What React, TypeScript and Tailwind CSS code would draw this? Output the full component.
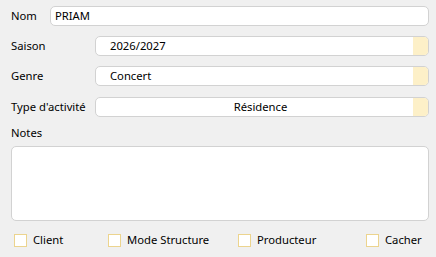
import React from "react";

const font = { fontFamily: '"Noto Sans", "Segoe UI", sans-serif' };

const SelectField = ({ value, center }: { value: string; center?: boolean }) => (
  <div className="ml-auto flex h-[20px] w-[334px] overflow-hidden rounded-[5px] border border-[#d2d2d2] bg-white">
    <div
      className={
        "flex flex-1 items-center text-[11.25px] text-black " +
        (center ? "justify-center pl-[12px]" : "pl-[14px]")
      }
    >
      {value}
    </div>
    <div className="w-[15px] bg-[#fdf0c8]" />
  </div>
);

const Check = ({ label, className }: { label: string; className: string }) => (
  <div className={"flex items-center " + className}>
    <div className="h-[13px] w-[13px] shrink-0 border border-[#ecd48e] bg-white" />
    <span className="ml-[6px] text-[11.25px] text-black">{label}</span>
  </div>
);

const App = () => {
  return (
    <div className="h-[257px] w-[436px] bg-[#f0f0f0] pl-[11px] pr-[7px] pt-[6px]" style={font}>
      <div className="flex h-[20px] items-center">
        <span className="text-[11.25px] text-black">Nom</span>
        <div className="ml-auto flex h-[20px] w-[379px] items-center rounded-[5px] border border-[#d2d2d2] bg-white pl-[4px] text-[11.25px] text-black">
          PRIAM
        </div>
      </div>
      <div className="mt-[10px] flex h-[20px] items-center">
        <span className="text-[11.25px] text-black">Saison</span>
        <SelectField value="2026/2027" />
      </div>
      <div className="mt-[10px] flex h-[20px] items-center">
        <span className="text-[11.25px] text-black">Genre</span>
        <SelectField value="Concert" />
      </div>
      <div className="mt-[11px] flex h-[20px] items-center">
        <span className="text-[11.25px] text-black">Type d'activité</span>
        <SelectField value="Résidence" center />
      </div>
      <div className="mt-[8px] text-[11.25px] leading-[16px] text-black">Notes</div>
      <div className="mt-[5px] h-[75px] rounded-[5px] border border-[#d2d2d2] bg-white" />
      <div className="mt-[12px] flex h-[14px] items-center">
        <Check label="Client" className="ml-[3px] w-[94px]" />
        <Check label="Mode Structure" className="w-[130px]" />
        <Check label="Producteur" className="w-[128px]" />
        <Check label="Cacher" className="" />
      </div>
    </div>
  );
};

export default App;
